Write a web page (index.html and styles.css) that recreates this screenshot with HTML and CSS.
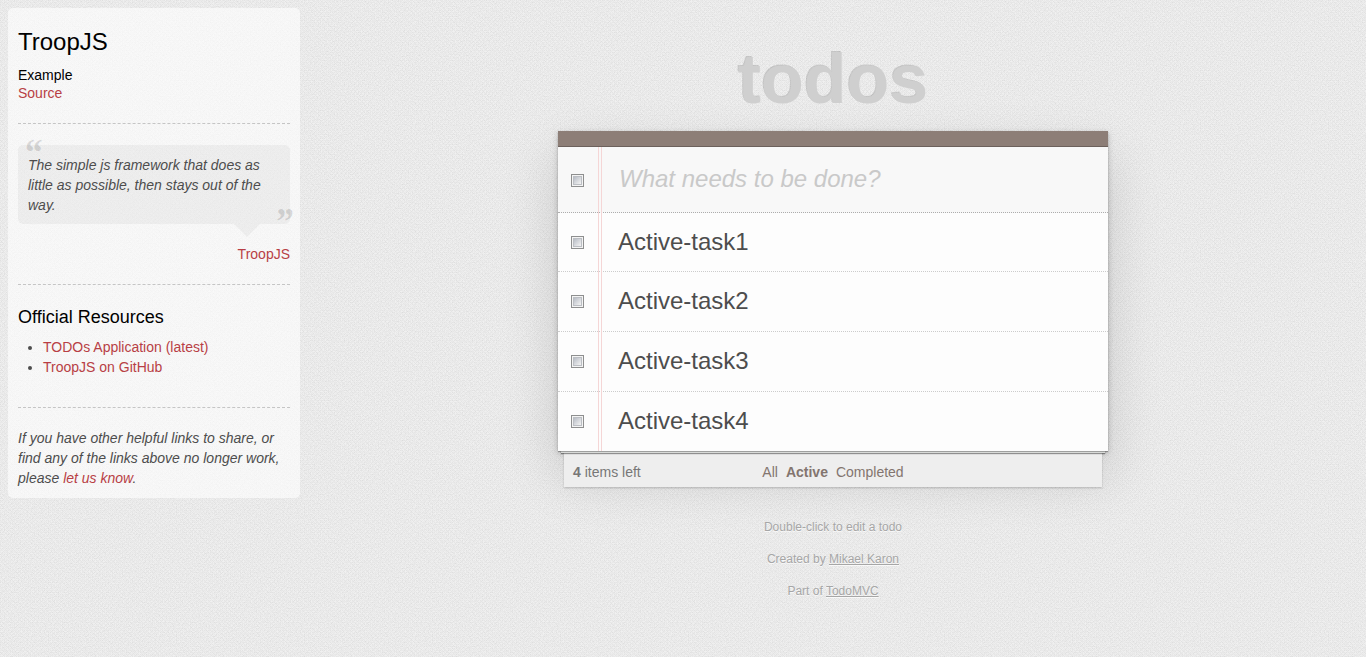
FILE: index.html
```html
<!DOCTYPE html>
<html lang="en">
<head>
<meta charset="utf-8">
<title>TroopJS • TodoMVC</title>
<link rel="stylesheet" href="styles.css">
</head>
<body>
<aside class="learn">
  <header>
    <h3>TroopJS</h3>
    <h5>Example</h5>
    <a href="#source">Source</a>
  </header>
  <hr>
  <blockquote class="quote">
    <p class="speech">The simple js framework that does as little as possible, then stays out of the way.</p>
    <footer><a href="#troopjs">TroopJS</a></footer>
  </blockquote>
  <hr>
  <h4>Official Resources</h4>
  <ul class="links">
    <li><a href="#app">TODOs Application (latest)</a></li>
    <li><a href="#github">TroopJS on GitHub</a></li>
  </ul>
  <hr>
  <footer class="share">If you have other helpful links to share, or find any of the links above no longer work, please <a href="#issues">let us know</a>.</footer>
</aside>
<main class="page">
  <h1 class="title">todos</h1>
  <section class="todoapp">
    <header class="entry">
      <input class="check" type="checkbox" id="toggle-all" aria-label="Mark all as complete">
      <input class="new-todo" type="text" placeholder="What needs to be done?" aria-label="New todo">
    </header>
    <ul class="todo-list">
      <li><input class="check" type="checkbox" id="t1"><label for="t1">Active-task1</label></li>
      <li><input class="check" type="checkbox" id="t2"><label for="t2">Active-task2</label></li>
      <li><input class="check" type="checkbox" id="t3"><label for="t3">Active-task3</label></li>
      <li><input class="check" type="checkbox" id="t4"><label for="t4">Active-task4</label></li>
    </ul>
  </section>
  <footer class="status">
    <span class="count"><strong>4</strong> items left</span>
    <nav class="filters">
      <a href="#all">All</a>
      <a class="selected" href="#active">Active</a>
      <a href="#completed">Completed</a>
    </nav>
  </footer>
  <footer class="info">
    <p>Double-click to edit a todo</p>
    <p>Created by <a href="#author">Mikael Karon</a></p>
    <p>Part of <a href="#todomvc">TodoMVC</a></p>
  </footer>
</main>
</body>
</html>
```

FILE: styles.css
```css
* { box-sizing: border-box; }

body {
  margin: 0;
  min-height: 100vh;
  display: flex;
  align-items: flex-start;
  padding-left: 8px;
  font: 14px/20px "Liberation Sans", Arial, sans-serif;
  color: #4d4d4d;
  background: #f0f0f0 url("data:image/svg+xml,%3Csvg xmlns='http://www.w3.org/2000/svg' width='128' height='128'%3E%3Cdefs%3E%3Cpattern id='w' width='4' height='4' patternUnits='userSpaceOnUse'%3E%3Cpath d='M0 0h1v1H0zM2 2h1v1H2zM2 0h1v1H2zM0 2h1v1H0zM1 1h1v1H1zM3 3h1v1H3z' fill-opacity='.03'/%3E%3C/pattern%3E%3Cfilter id='n' x='0' y='0' width='1' height='1'%3E%3CfeTurbulence type='fractalNoise' baseFrequency='.7 .8' numOctaves='1' stitchTiles='stitch'/%3E%3CfeColorMatrix values='0 0 0 0 0 0 0 0 0 0 0 0 0 0 0 .13 0 0 0 -.05'/%3E%3C/filter%3E%3C/defs%3E%3Crect width='128' height='128' filter='url(%23n)'/%3E%3Crect width='128' height='128' fill='url(%23w)'/%3E%3C/svg%3E");
}

a { color: #b83f45; text-decoration: none; }
ul { margin: 0; padding: 0; }

/* Sidebar */
.learn {
  flex: 0 0 292px;
  margin-top: 8px;
  padding: 20px 10px 10px;
  border-radius: 5px;
  background: rgba(255, 255, 255, .6);
}
.learn h3, .learn h4, .learn h5 { margin: 0; color: #000; font-weight: 400; }
.learn h3 { font-size: 24px; line-height: 28px; margin-bottom: 10px; }
.learn h4 { font-size: 18px; line-height: 24px; margin-bottom: 8px; }
.learn h5 { font-size: 14px; line-height: 18px; }
.learn header { padding-bottom: 1px; }
.learn header a { display: block; line-height: 18px; }
.learn hr {
  margin: 20px 0;
  border: 0;
  border-top: 1px dashed #c5c5c5;
}
.quote { margin: 21px 0 20px; }
.speech {
  position: relative;
  margin: 0;
  padding: 10px 10px 9px;
  border-radius: 5px;
  background: rgba(0, 0, 0, .04);
  font-style: italic;
}
.speech::before, .speech::after {
  position: absolute;
  font: italic bold 38px/44px "Liberation Serif", "Times New Roman", serif;
  color: rgba(0, 0, 0, .13);
}
.speech::before { content: "“"; top: -15px; left: 5px; }
.speech::after { content: "”"; right: -3px; bottom: -19px; }
.quote footer { position: relative; padding-top: 20px; text-align: right; }
.quote footer::before {
  content: "";
  position: absolute;
  top: 0;
  right: 30px;
  border: 13px solid transparent;
  border-bottom-width: 0;
  border-top-color: rgba(0, 0, 0, .04);
}
.links { padding-left: 25px; margin-bottom: 30px; }
.share { font-style: italic; }

/* Todo sheet */
.page {
  flex: 1;
  display: flex;
  flex-direction: column;
  align-items: center;
}
.title {
  margin: 0;
  padding-top: 39px;
  height: 131px;
  font-size: 70px;
  line-height: 80px;
  color: #cfcfcf;
  text-shadow: -1px -1px 0 rgba(0, 0, 0, .15);
}
/* The stacked sheets below the list are layers of this shadow */
.todoapp {
  position: relative;
  width: 100%;
  max-width: 550px;
  background: #fdfdfd;
  box-shadow:
    0 1px 1px rgba(0, 0, 0, .3),
    0 5px 0 -3px #e4e6e4,
    0 6px 1px -3px rgba(0, 0, 0, .4),
    0 42px 0 -6px #eeeeee,
    0 43px 2px -6px rgba(0, 0, 0, .2),
    0 2px 6px rgba(0, 0, 0, .2),
    0 25px 50px rgba(0, 0, 0, .15);
}
.todoapp::after {
  content: "";
  position: absolute;
  top: 16px;
  bottom: 0;
  left: 40px;
  width: 2px;
  border: 1px solid #f5d6d6;
  border-width: 0 1px;
}
.entry {
  display: flex;
  align-items: center;
  border-top: 15px solid #8d7e77;
  border-bottom: 1px dotted #adadad;
  background: #f8f8f8;
  box-shadow: inset 0 1px #6c615c;
}
.new-todo {
  flex: 1;
  min-width: 0;
  height: 66px;
  padding: 0 16px 0 35px;
  border: 0;
  outline: 0;
  background: none;
  font: 24px "Liberation Sans", Arial, sans-serif;
  color: #4d4d4d;
}
.new-todo::placeholder { color: #c9c9c9; font-style: italic; opacity: 1; }
.check {
  appearance: none;
  flex: none;
  width: 13px;
  height: 13px;
  margin: 0 0 0 13px;
  border: 1px solid #8e8f8f;
  background: linear-gradient(135deg, #b8bdc6, #f4f4f4) content-box, #f4f4f4;
  padding: 2px;
  box-shadow: inset 0 0 0 1px #f4f4f4, inset 0 0 0 2px #bcbfc4;
}
.entry .check { margin-top: 2px; }
.todo-list { list-style: none; }
.todo-list li {
  display: flex;
  align-items: center;
  height: 60px;
  border-bottom: 1px dotted #ccc;
}
.todo-list li:first-child { height: 59px; }
.todo-list li:last-child { height: 59px; border-bottom: 0; }
.todo-list label {
  flex: 1;
  padding: 0 16px 1px 34px;
  font-size: 24px;
  line-height: 28px;
}

/* Status strip */
.status {
  position: relative;
  display: grid;
  grid-template-columns: 1fr auto 1fr;
  align-items: center;
  width: 100%;
  max-width: 538px;
  height: 37px;
  padding: 5px 9px 0;
  color: #777;
}
.filters { display: flex; gap: 8px; }
.filters a { color: #83756f; }
.filters .selected { font-weight: 700; }

.info {
  position: relative;
  padding-top: 31px;
  font-size: 12px;
  line-height: 16px;
  text-align: center;
  color: #a6a6a6;
  text-shadow: 0 1px 0 rgba(255, 255, 255, .7);
}
.info p { margin: 0 0 16px; }
.info a { color: inherit; text-decoration: underline; }
```
